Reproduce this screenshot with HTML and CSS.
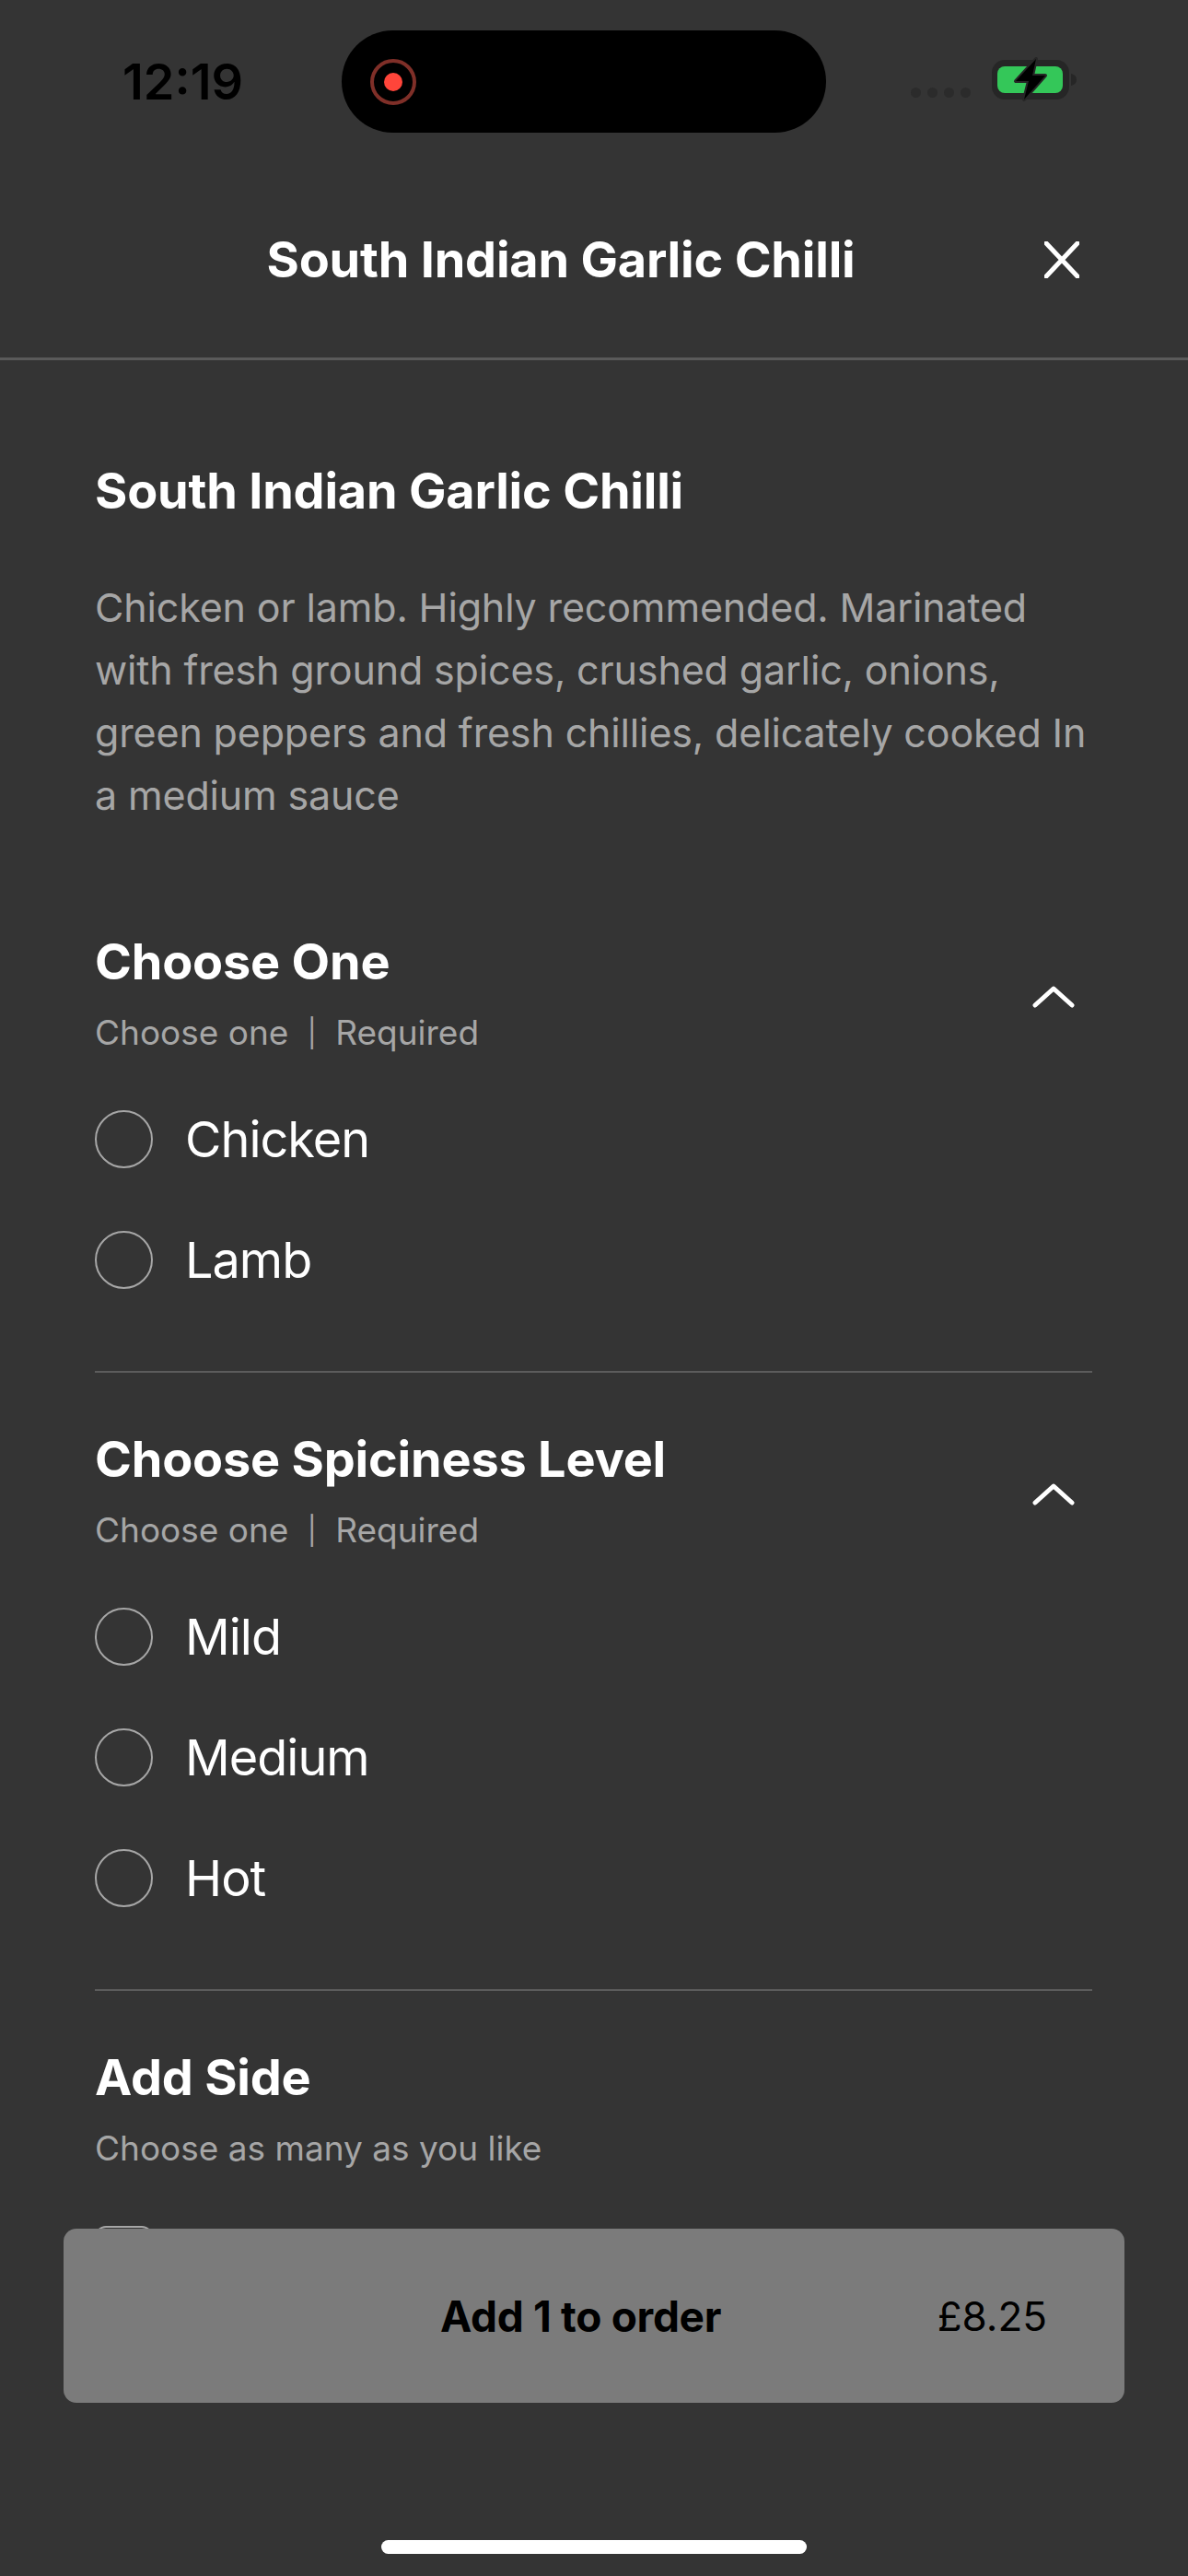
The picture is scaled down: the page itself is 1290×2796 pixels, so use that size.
FILE: index.html
```html
<!DOCTYPE html>
<html lang="en">
<head>
  <meta charset="UTF-8" />
  <meta name="viewport" content="width=device-width, initial-scale=1.0"/>
  <title>South Indian Garlic Chilli</title>
  <link rel="stylesheet" href="styles.css">
</head>
<body>
  <div class="screen">
    <div class="status-bar">
      <span class="time">12:19</span>
      <div class="island">
        <span class="rec"><span class="rec-dot"></span></span>
      </div>
      <div class="status-right">
        <div class="signal"><i></i><i></i><i></i><i></i></div>
        <svg class="battery" width="96" height="60" viewBox="0 0 96 60">
          <rect x="4" y="10" width="84" height="43" rx="14" fill="#262626"/>
          <rect x="10" y="17" width="71" height="29" rx="8" fill="#34c759"/>
          <path d="M90 25c4 1 6 3 6 6.500s-2 5.500-6 6.500z" fill="#262626"/>
          <path d="M52 9 30 33h14l-5 20 23-26H48z" fill="#000" stroke="#262626" stroke-width="4" stroke-linejoin="round" paint-order="stroke"/>
        </svg>
      </div>
    </div>

    <div class="modal-head">
      <h2 class="modal-title">South Indian Garlic Chilli</h2>
      <svg class="close" width="38" height="40" viewBox="0 0 38 40">
        <path d="M2 2 36 38M36 2 2 38" stroke="#fff" stroke-width="5" stroke-linecap="round" fill="none"/>
      </svg>
    </div>

    <div class="content">
      <h1 class="item-title">South Indian Garlic Chilli</h1>
      <p class="item-desc">Chicken or lamb. Highly recommended. Marinated with fresh ground spices, crushed garlic, onions, green peppers and fresh chillies, delicately cooked In a medium sauce</p>

      <section class="group">
        <div class="group-head">
          <div>
            <h3>Choose One</h3>
            <p class="hint">Choose one <span class="sep">|</span> Required</p>
          </div>
          <svg class="chevron" width="46" height="24" viewBox="0 0 46 24">
            <path d="M3 21 23 3 43 21" stroke="#fff" stroke-width="5" stroke-linecap="round" stroke-linejoin="round" fill="none"/>
          </svg>
        </div>
        <div class="options">
          <div class="option"><span class="radio"></span>Chicken</div>
          <div class="option"><span class="radio"></span>Lamb</div>
        </div>
      </section>

      <section class="group">
        <div class="group-head">
          <div>
            <h3>Choose Spiciness Level</h3>
            <p class="hint">Choose one <span class="sep">|</span> Required</p>
          </div>
          <svg class="chevron" width="46" height="24" viewBox="0 0 46 24">
            <path d="M3 21 23 3 43 21" stroke="#fff" stroke-width="5" stroke-linecap="round" stroke-linejoin="round" fill="none"/>
          </svg>
        </div>
        <div class="options">
          <div class="option"><span class="radio"></span>Mild</div>
          <div class="option"><span class="radio"></span>Medium</div>
          <div class="option"><span class="radio"></span>Hot</div>
        </div>
      </section>

      <section class="group last">
        <div class="group-head">
          <div>
            <h3>Add Side</h3>
            <p class="hint">Choose as many as you like</p>
          </div>
        </div>
        <div class="options">
          <div class="option"><span class="checkbox"></span></div>
        </div>
      </section>
    </div>

    <button class="add-btn">
      <span class="add-label">Add 1 to order</span>
      <span class="add-price">£8.25</span>
    </button>

    <div class="home-bar"></div>
  </div>
</body>
</html>
```

FILE: styles.css
```css
* {
  box-sizing: border-box;
}

body {
  margin: 0;
  padding: 0;
  font-family: "Inter", "Liberation Sans", sans-serif;
  background: #343434;
}

.screen {
  position: relative;
  width: 1290px;
  height: 2796px;
  overflow: hidden;
  background: #343434;
  color: #fff;
}

/* status bar */
.status-bar {
  display: flex;
  align-items: flex-start;
  height: 144px;
  padding: 33px 121px 0 133px;
}

.time {
  width: 238px;
  margin-top: 25px;
  color: #000;
  font-size: 54px;
  line-height: 62px;
  font-weight: 600;
}

.island {
  display: flex;
  align-items: center;
  width: 526px;
  height: 111px;
  padding-left: 31px;
  border-radius: 56px;
  background: #000;
}

.rec {
  display: flex;
  align-items: center;
  justify-content: center;
  width: 50px;
  height: 50px;
  border: 4px solid #7f2f28;
  border-radius: 50%;
}

.rec-dot {
  width: 20px;
  height: 20px;
  border-radius: 50%;
  background: #ff453a;
}

.status-right {
  display: flex;
  align-items: flex-start;
  margin-left: auto;
}

.signal {
  display: flex;
  gap: 7px;
  margin-top: 62px;
  margin-right: 19px;
}

.signal i {
  width: 11px;
  height: 11px;
  border-radius: 50%;
  background: #2b2b2b;
}

.battery {
  margin-top: 22px;
}

/* modal header */
.modal-head {
  display: flex;
  align-items: center;
  height: 247px;
  padding: 32px 118px 0 84px;
  border-bottom: 3px solid #5a5a5a;
}

.modal-title {
  flex: 1;
  margin: 0;
  text-align: center;
  font-size: 54px;
  line-height: 64px;
  font-weight: 700;
  letter-spacing: -0.2px;
}

/* body */
.content {
  padding: 110px 104px 0 103px;
}

.item-title {
  margin: 0;
  font-size: 54px;
  line-height: 64px;
  font-weight: 700;
  letter-spacing: -0.2px;
}

.item-desc {
  margin: 60px 0 115px;
  color: #a6a6a6;
  font-size: 43px;
  line-height: 68px;
  letter-spacing: -0.15px;
}

.group {
  padding-bottom: 90px;
  margin-bottom: 62px;
  border-bottom: 2px solid #5c5c5c;
}

.group.last {
  border-bottom: none;
}

.group-head {
  display: flex;
  align-items: center;
  justify-content: space-between;
}

.group-head h3 {
  margin: 0;
  font-size: 54px;
  line-height: 64px;
  font-weight: 700;
  letter-spacing: -0.2px;
}

.hint {
  margin: 20px 0 0;
  color: #a6a6a6;
  font-size: 37px;
  line-height: 50px;
}

.sep {
  margin: 0 10px;
  font-size: 30px;
  vertical-align: 2px;
}

.chevron {
  margin-top: 6px;
  margin-right: 19px;
}

.options {
  display: flex;
  flex-direction: column;
  gap: 69px;
  margin-top: 59px;
}

.option {
  display: flex;
  align-items: center;
  gap: 35px;
  height: 62px;
  font-size: 54px;
  letter-spacing: -1px;
}

.radio {
  flex: none;
  width: 63px;
  height: 63px;
  border: 2px solid #a6a6a6;
  border-radius: 50%;
}

.checkbox {
  flex: none;
  width: 63px;
  height: 63px;
  border: 2px solid #a6a6a6;
  border-radius: 12px;
}

/* sticky button sits over the list */
.add-btn {
  position: absolute;
  left: 69px;
  top: 2419px;
  display: flex;
  align-items: center;
  justify-content: space-between;
  width: 1152px;
  height: 189px;
  padding: 0 84px 0 409px;
  border: none;
  border-radius: 14px;
  background: #7b7b7b;
  color: #000;
  font-family: inherit;
}

.add-label {
  font-size: 46px;
  font-weight: 700;
  letter-spacing: -0.3px;
}

.add-price {
  font-size: 44px;
}

.home-bar {
  position: absolute;
  left: 414px;
  top: 2757px;
  width: 462px;
  height: 15px;
  border-radius: 8px;
  background: #fff;
}
```
